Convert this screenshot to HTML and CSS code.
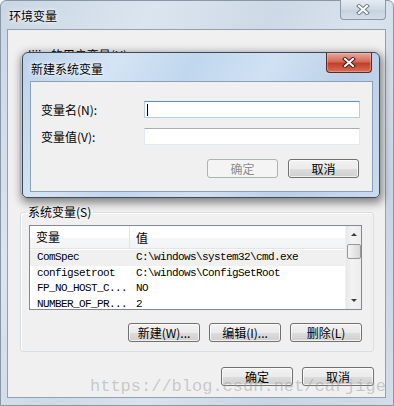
FILE: index.html
```html
<!DOCTYPE html>
<html lang="zh-CN">
<head>
    <meta charset="UTF-8">
    <title>环境变量</title>
    <link rel="stylesheet" href="styles.css">
</head>
<body>
    <div class="desk">
        <!-- main window -->
        <div class="window main-window">
            <div class="titlebar">
                <span class="title">环境变量</span>
                <span class="close-btn inactive">
                    <svg width="14" height="11" viewBox="0 0 14 11">
                        <path d="M3 2 L11 9 M11 2 L3 9" stroke="#6f7d8c" stroke-width="4" stroke-linecap="square"/>
                        <path d="M3 2 L11 9 M11 2 L3 9" stroke="#fff" stroke-width="2" stroke-linecap="square"/>
                    </svg>
                </span>
            </div>
            <div class="client">
                <fieldset class="group user-group">
                    <legend>lijie 的用户变量(U)</legend>
                </fieldset>

                <fieldset class="group sys-group">
                    <legend>系统变量(S)</legend>
                    <div class="listview">
                        <div class="lv-body">
                            <div class="lv-head">
                                <div class="col1">变量</div>
                                <div class="col2">值</div>
                            </div>
                            <div class="lv-row hot"><span class="col1">ComSpec</span><span class="col2">C:\windows\system32\cmd.exe</span></div>
                            <div class="lv-row"><span class="col1">configsetroot</span><span class="col2">C:\windows\ConfigSetRoot</span></div>
                            <div class="lv-row"><span class="col1">FP_NO_HOST_C...</span><span class="col2">NO</span></div>
                            <div class="lv-row"><span class="col1">NUMBER_OF_PR...</span><span class="col2">2</span></div>
                        </div>
                        <div class="scrollbar">
                            <span class="arrow up"></span>
                            <span class="thumb"></span>
                            <span class="track"></span>
                            <span class="arrow down"></span>
                        </div>
                    </div>
                    <div class="btn-row">
                        <button class="btn">新建(W)...</button>
                        <button class="btn">编辑(I)...</button>
                        <button class="btn">删除(L)</button>
                    </div>
                </fieldset>

                <div class="btn-row bottom-row">
                    <button class="btn">确定</button>
                    <button class="btn">取消</button>
                </div>
            </div>
        </div>

        <!-- dialog on top -->
        <div class="window dialog">
            <div class="titlebar">
                <span class="title">新建系统变量</span>
                <span class="close-btn active">
                    <svg width="14" height="11" viewBox="0 0 14 11">
                        <path d="M3 2 L11 9 M11 2 L3 9" stroke="#4a1f18" stroke-width="4" stroke-linecap="square"/>
                        <path d="M3 2 L11 9 M11 2 L3 9" stroke="#fff" stroke-width="2" stroke-linecap="square"/>
                    </svg>
                </span>
            </div>
            <div class="client dlg-client">
                <div class="field">
                    <label for="vname">变量名(N):</label>
                    <div class="textbox focused" id="vname"><span class="caret"></span></div>
                </div>
                <div class="field">
                    <label for="vvalue">变量值(V):</label>
                    <div class="textbox" id="vvalue"></div>
                </div>
                <div class="btn-row dlg-buttons">
                    <button class="btn" disabled>确定</button>
                    <button class="btn">取消</button>
                </div>
            </div>
        </div>

        <div class="watermark">https://blog.csdn.net/carjige</div>
    </div>
</body>
</html>
```

FILE: styles.css
```css
body {
    margin: 0;
    font-family: "Noto Sans CJK SC", sans-serif;
    font-size: 12px;
    color: #000;
    background: #fff;
}

.desk {
    position: relative;
    width: 394px;
    height: 406px;
    overflow: hidden;
}

/* Windows on the desktop */
.window {
    position: absolute;
    box-sizing: border-box;
    display: flex;
    flex-direction: column;
}

.main-window {
    left: 0;
    top: 0;
    width: 394px;
    height: 406px;
    border: 1px solid #8a97a6;
    border-radius: 6px 6px 0 0;
    padding: 0 7px 7px 6px;
    background: linear-gradient(120deg, #c9d6e4 0%, #dbe5ef 25%, #cdd9e6 45%, #d9e3ee 60%, #c8d5e3 80%, #d3dde9 100%);
}

.dialog {
    left: 22px;
    top: 52px;
    width: 358px;
    height: 146px;
    border: 1px solid #3e4a58;
    border-radius: 6px 6px 5px 5px;
    padding: 0 6px 5px 7px;
    background: linear-gradient(120deg, #bcd2ea 0%, #d4e4f4 22%, #c1d7ee 40%, #d0e1f3 58%, #bad0e8 78%, #c9dcf0 100%);
    box-shadow: 1px 3px 9px 2px rgba(0, 0, 0, 0.45);
}

.titlebar {
    height: 28px;
    display: flex;
    justify-content: space-between;
    align-items: flex-start;
    flex-shrink: 0;
}

.title {
    padding-left: 2px;
    line-height: 30px;
    text-shadow: 0 0 6px #fff, 0 0 3px #fff;
}

.dialog .title {
    padding-left: 1px;
    line-height: 31px;
}

.close-btn {
    width: 46px;
    height: 19px;
    box-sizing: border-box;
    border-radius: 0 0 4px 4px;
    display: flex;
    align-items: center;
    justify-content: center;
}

.close-btn.inactive {
    margin-top: -1px;
    height: 20px;
    border: 1px solid #8b98a7;
    border-top: none;
    background: linear-gradient(#e4ebf2, #cfd9e4 50%, #c5d1de 51%, #d3dde8);
}

.close-btn.active {
    height: 20px;
    margin-right: 1px;
    border: 1px solid #5c2a22;
    border-top: none;
    background: linear-gradient(#e7a99c, #d46a55 45%, #c33f2a 55%, #d2705a);
    box-shadow: inset 0 0 0 1px rgba(255, 200, 190, 0.4);
}

.client {
    flex: 1;
    border: 1px solid #92a1b1;
    background: #f0f0f0;
    padding: 17px 11px 0 12px;
    display: flex;
    flex-direction: column;
}

/* Group boxes */
.group {
    margin: 0;
    border: 1px solid #d5dfe5;
    border-radius: 3px;
    box-shadow: inset 1px 1px 0 #fff;
    padding: 5px 11px 9px 8px;
    min-width: 0;
}

.group legend {
    padding: 0 2px;
    margin-left: -3px;
    line-height: 16px;
}

.user-group {
    height: 148px;
    box-sizing: border-box;
}

.sys-group {
    margin-top: 9px;
}

/* List view */
.listview {
    height: 85px;
    box-sizing: border-box;
    border: 1px solid #828790;
    background: #fff;
    display: flex;
}

.lv-body {
    flex: 1;
    overflow: hidden;
}

.lv-head {
    height: 22px;
    display: flex;
    align-items: center;
    background: linear-gradient(#fff 0%, #fff 55%, #f5f6f7 56%, #f3f4f6 100%);
    border-bottom: 1px solid #e5e5e5;
    margin-bottom: 1px;
}

.lv-head .col1 {
    width: 93px;
    padding-left: 6px;
    height: 22px;
    line-height: 22px;
    border-right: 1px solid #e3e6ea;
}

.lv-head .col2 {
    padding-left: 6px;
}

.lv-row {
    height: 15.5px;
    line-height: 15.5px;
    display: flex;
    font-family: "Liberation Mono", monospace;
    font-size: 11px;
    letter-spacing: -0.6px;
    white-space: nowrap;
}

.lv-row.hot {
    background: #f0f0f0;
}

.lv-row .col1 {
    width: 92px;
    padding-left: 7px;
    flex-shrink: 0;
}

.lv-row .col2 {
    padding-left: 7px;
}

.scrollbar {
    width: 15px;
    background: linear-gradient(90deg, #e8e8e8, #f3f3f3 40%, #ececec);
    border-left: 1px solid #f0f0f0;
    display: flex;
    flex-direction: column;
    align-items: center;
}

.arrow {
    width: 0;
    height: 0;
    border-left: 3px solid transparent;
    border-right: 3px solid transparent;
}

.arrow.up {
    margin-top: 7px;
    border-bottom: 3px solid #3c3c3c;
}

.arrow.down {
    margin-bottom: 7px;
    border-top: 3px solid #3c3c3c;
}

.thumb {
    margin-top: 8px;
    width: 14px;
    height: 15px;
    box-sizing: border-box;
    border: 1px solid #979797;
    border-radius: 2px;
    background: linear-gradient(90deg, #f4f4f4, #e6e6e6 50%, #d8d8d8);
}

.track {
    flex: 1;
}

/* Buttons */
.btn-row {
    display: flex;
    justify-content: flex-end;
    gap: 9px;
    margin-top: 13px;
}

.btn {
    width: 72px;
    height: 19px;
    padding: 0;
    font-family: "Noto Sans CJK SC", sans-serif;
    font-size: 12px;
    line-height: 16px;
    color: #000;
    border: 1px solid #707070;
    border-radius: 3px;
    background: linear-gradient(#f2f2f2 0%, #ebebeb 50%, #dddddd 51%, #cfcfcf 100%);
    box-shadow: inset 0 0 0 1px rgba(255, 255, 255, 0.7);
}

.btn:disabled {
    color: #8d8d8d;
    border-color: #adb2b5;
    background: #f4f4f4;
    box-shadow: none;
}

.bottom-row {
    margin-top: 15px;
}

/* Dialog client */
.dlg-client {
    padding: 19px 12px 0 10px;
    border-color: #8ba0b7;
}

.field {
    display: flex;
    align-items: center;
    margin-bottom: 10px;
}

.field label {
    width: 103px;
    flex-shrink: 0;
}

.textbox {
    width: 217px;
    height: 17px;
    box-sizing: border-box;
    background: #fff;
    border: 1px solid #e3e9ef;
    border-top-color: #abadb3;
    display: flex;
    align-items: center;
}

.textbox.focused {
    border-color: #b5cfe7;
    border-top-color: #5b8dbd;
}

.caret {
    width: 1px;
    height: 12px;
    margin-left: 2px;
    background: #000;
}

.dlg-buttons {
    margin-top: 4px;
    gap: 10px;
    padding-right: 1px;
}

.dlg-buttons .btn {
    width: 71px;
}

/* Watermark over everything */
.watermark {
    position: absolute;
    left: 90px;
    top: 377px;
    font-family: "Liberation Mono", monospace;
    font-size: 17px;
    color: rgba(150, 150, 150, 0.45);
    white-space: nowrap;
}
```
